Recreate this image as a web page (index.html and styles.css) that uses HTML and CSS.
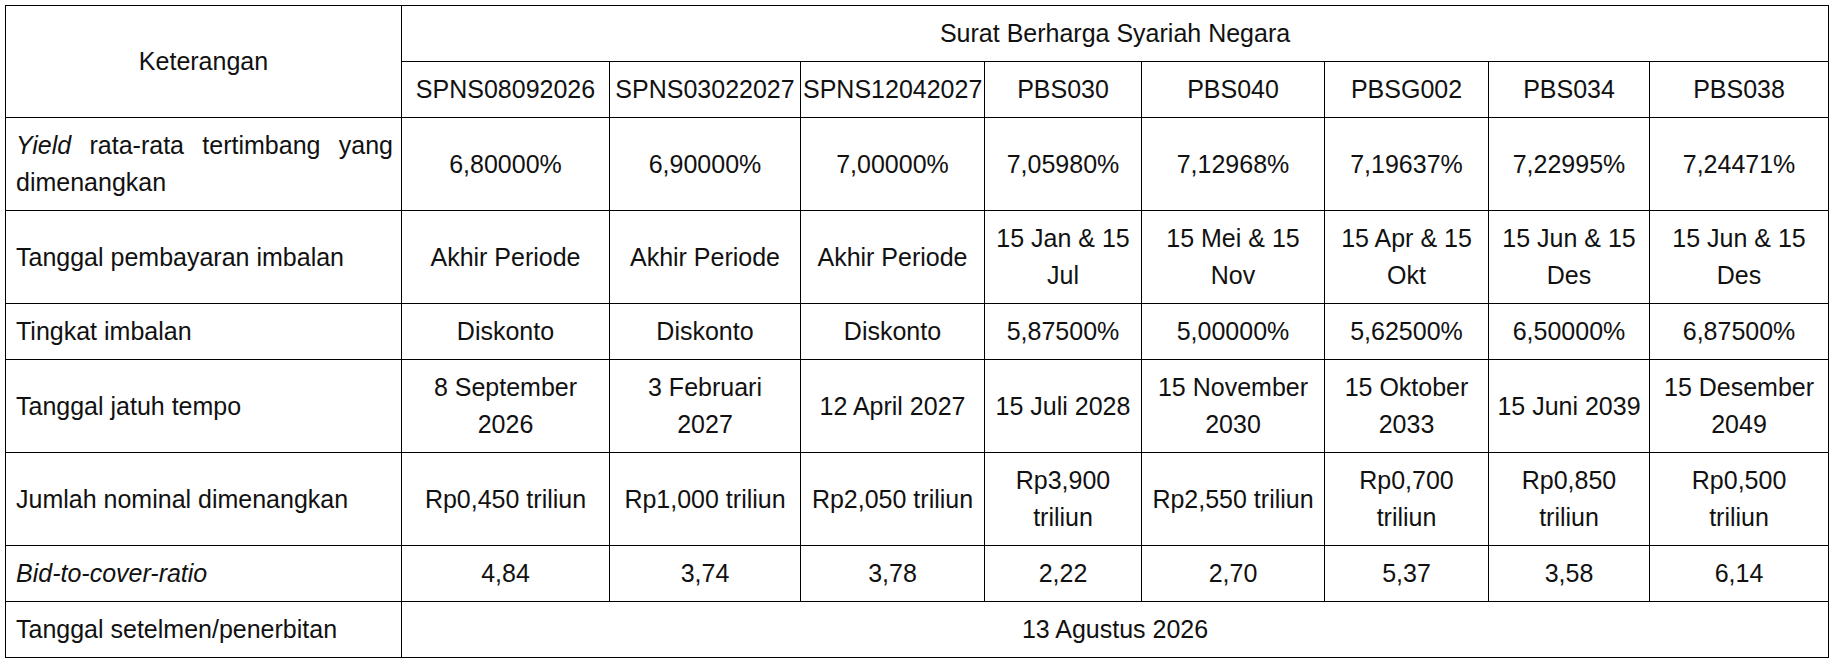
FILE: index.html
```html
<!DOCTYPE html>
<html lang="id">
<head>
<meta charset="utf-8">
<title>Hasil Lelang SBSN</title>
<link rel="stylesheet" href="styles.css">
</head>
<body>
<table class="sbsn">
  <colgroup>
    <col class="c-label">
    <col class="c1"><col class="c2"><col class="c3"><col class="c4">
    <col class="c5"><col class="c6"><col class="c7"><col class="c8">
  </colgroup>
  <thead>
    <tr>
      <th rowspan="2" class="head-label">Keterangan</th>
      <th colspan="8">Surat Berharga Syariah Negara</th>
    </tr>
    <tr>
      <th>SPNS08092026</th>
      <th>SPNS03022027</th>
      <th>SPNS12042027</th>
      <th>PBS030</th>
      <th>PBS040</th>
      <th>PBSG002</th>
      <th>PBS034</th>
      <th>PBS038</th>
    </tr>
  </thead>
  <tbody>
    <tr>
      <td class="label justify"><span class="it">Yield</span> <span>rata-rata tertimbang yang</span> <span>dimenangkan</span></td>
      <td>6,80000%</td>
      <td>6,90000%</td>
      <td>7,00000%</td>
      <td>7,05980%</td>
      <td>7,12968%</td>
      <td>7,19637%</td>
      <td>7,22995%</td>
      <td>7,24471%</td>
    </tr>
    <tr>
      <td class="label">Tanggal pembayaran imbalan</td>
      <td>Akhir Periode</td>
      <td>Akhir Periode</td>
      <td>Akhir Periode</td>
      <td>15 Jan &amp; 15<br>Jul</td>
      <td>15 Mei &amp; 15<br>Nov</td>
      <td>15 Apr &amp; 15<br>Okt</td>
      <td>15 Jun &amp; 15<br>Des</td>
      <td>15 Jun &amp; 15<br>Des</td>
    </tr>
    <tr>
      <td class="label">Tingkat imbalan</td>
      <td>Diskonto</td>
      <td>Diskonto</td>
      <td>Diskonto</td>
      <td>5,87500%</td>
      <td>5,00000%</td>
      <td>5,62500%</td>
      <td>6,50000%</td>
      <td>6,87500%</td>
    </tr>
    <tr>
      <td class="label">Tanggal jatuh tempo</td>
      <td>8 September<br>2026</td>
      <td>3 Februari<br>2027</td>
      <td>12 April 2027</td>
      <td>15 Juli 2028</td>
      <td>15 November<br>2030</td>
      <td>15 Oktober<br>2033</td>
      <td>15 Juni 2039</td>
      <td>15 Desember<br>2049</td>
    </tr>
    <tr>
      <td class="label">Jumlah nominal dimenangkan</td>
      <td>Rp0,450 triliun</td>
      <td>Rp1,000 triliun</td>
      <td>Rp2,050 triliun</td>
      <td>Rp3,900<br>triliun</td>
      <td>Rp2,550 triliun</td>
      <td>Rp0,700<br>triliun</td>
      <td>Rp0,850<br>triliun</td>
      <td>Rp0,500<br>triliun</td>
    </tr>
    <tr>
      <td class="label"><span class="it">Bid-to-cover-ratio</span></td>
      <td>4,84</td>
      <td>3,74</td>
      <td>3,78</td>
      <td>2,22</td>
      <td>2,70</td>
      <td>5,37</td>
      <td>3,58</td>
      <td>6,14</td>
    </tr>
    <tr>
      <td class="label">Tanggal setelmen/penerbitan</td>
      <td colspan="8">13 Agustus 2026</td>
    </tr>
  </tbody>
</table>
</body>
</html>
```

FILE: styles.css
```css
html, body {
  margin: 0;
  padding: 0;
  background: #ffffff;
}

body {
  font-family: "Liberation Sans", Arial, sans-serif;
  color: #111111;
}

.sbsn {
  margin: 5px 0 0 5px;
  border-collapse: collapse;
  table-layout: fixed;
  width: 1823px;
  font-size: 25px;
  line-height: 37px;
}

.c-label { width: 396px; }
.c1 { width: 208px; }
.c2 { width: 191px; }
.c3 { width: 184px; }
.c4 { width: 157px; }
.c5 { width: 183px; }
.c6 { width: 164px; }
.c7 { width: 161px; }
.c8 { width: 179px; }

.sbsn th,
.sbsn td {
  border: 1px solid #000;
  padding: 9px 2px;
  text-align: center;
  vertical-align: middle;
  font-weight: normal;
  white-space: nowrap;
}

.sbsn td.label {
  text-align: left;
  padding-left: 10px;
  padding-right: 8px;
  white-space: normal;
}

.sbsn td.justify {
  text-align: justify;
}

.sbsn .it {
  font-style: italic;
}
```
